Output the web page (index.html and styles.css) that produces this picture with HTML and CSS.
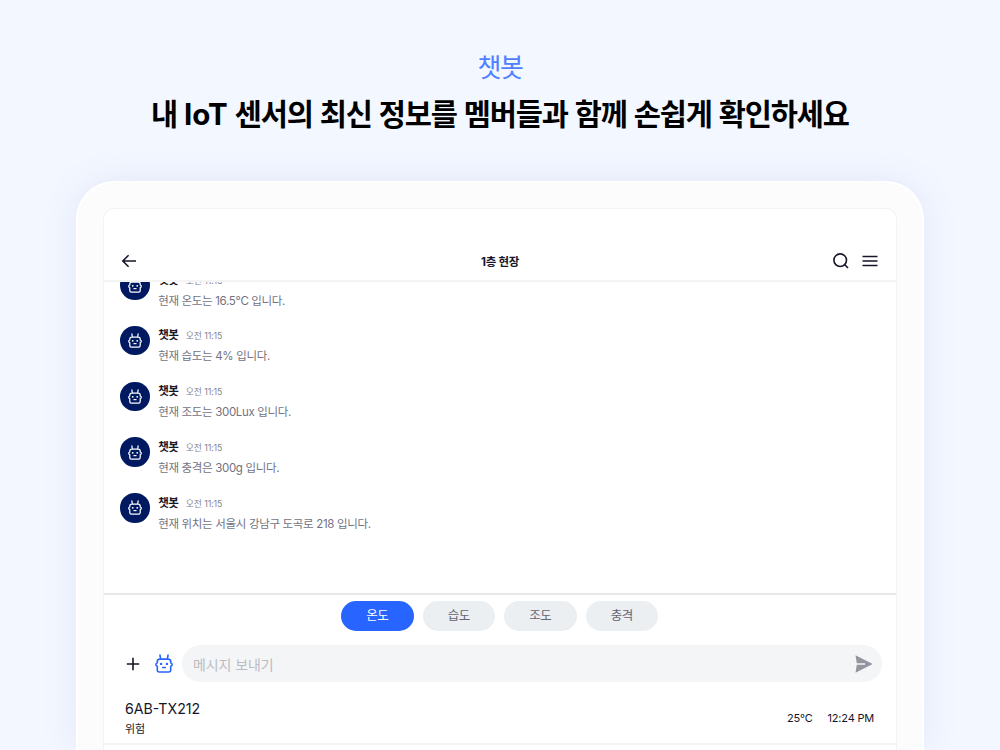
FILE: index.html
```html
<!DOCTYPE html>
<html lang="ko">
<head>
    <meta charset="UTF-8">
    <meta name="viewport" content="width=device-width, initial-scale=1.0">
    <title>챗봇</title>
    <link rel="stylesheet" href="styles.css">
</head>
<body>
    <svg class="symbols" width="0" height="0">
        <symbol id="robot" viewBox="0 0 18 19">
            <path d="M5 1 5.500 4.900M13 1 12.500 4.900M5 5.100h8q2.500 0 2.700 2v1.600q1.400.4 1.400 1.800t-1.400 1.800v3.700q0 2-2 2H4.300q-2 0-2-2v-3.700Q.9 11.900.9 10.500t1.400-1.800V7.100Q2.500 5.100 5 5.100z" fill="none" stroke="currentColor" stroke-width="1.600" stroke-linecap="round" stroke-linejoin="round"/>
            <path d="M7 13.500h4" fill="none" stroke="currentColor" stroke-width="1.500"/>
            <circle cx="6.100" cy="9.900" r="1.200" fill="currentColor"/>
            <circle cx="11.900" cy="9.900" r="1.200" fill="currentColor"/>
        </symbol>
    </svg>
    <div class="intro">
        <p class="label">챗봇</p>
        <h1>내 <span>IoT</span> 센서의 최신 정보를 멤버들과 함께 손쉽게 확인하세요</h1>
    </div>
    <div class="tablet">
        <div class="screen">
            <div class="header">
                <svg class="back" viewBox="0 0 16 14"><path d="M15 7H2M7.600 1.200 1.800 7l5.800 5.800"/></svg>
                <h2>1층 현장</h2>
                <div class="actions">
                    <svg class="find" viewBox="0 0 16 16"><circle cx="7.200" cy="7.200" r="6.300"/><path d="m11.800 11.800 3.200 3.200"/></svg>
                    <svg class="menu" viewBox="0 0 16 12"><path d="M.5 1.500h15M.5 6h15M.5 10.500h15"/></svg>
                </div>
            </div>
            <div class="chat">
                <div class="message">
                    <div class="avatar"><svg><use href="#robot"/></svg></div>
                    <div class="message-body">
                        <div class="who"><b>챗봇</b><span>오전 11:15</span></div>
                        <p>현재 온도는 16.5°C 입니다.</p>
                    </div>
                </div>
                <div class="message">
                    <div class="avatar"><svg><use href="#robot"/></svg></div>
                    <div class="message-body">
                        <div class="who"><b>챗봇</b><span>오전 11:15</span></div>
                        <p>현재 습도는 4% 입니다.</p>
                    </div>
                </div>
                <div class="message">
                    <div class="avatar"><svg><use href="#robot"/></svg></div>
                    <div class="message-body">
                        <div class="who"><b>챗봇</b><span>오전 11:15</span></div>
                        <p>현재 조도는 300Lux 입니다.</p>
                    </div>
                </div>
                <div class="message">
                    <div class="avatar"><svg><use href="#robot"/></svg></div>
                    <div class="message-body">
                        <div class="who"><b>챗봇</b><span>오전 11:15</span></div>
                        <p>현재 충격은 300g 입니다.</p>
                    </div>
                </div>
                <div class="message">
                    <div class="avatar"><svg><use href="#robot"/></svg></div>
                    <div class="message-body">
                        <div class="who"><b>챗봇</b><span>오전 11:15</span></div>
                        <p>현재 위치는 서울시 강남구 도곡로 218 입니다.</p>
                    </div>
                </div>
            </div>
            <div class="sensors">
                <button class="active">온도</button>
                <button>습도</button>
                <button>조도</button>
                <button>충격</button>
            </div>
            <div class="compose">
                <svg class="plus" viewBox="0 0 14 14"><path d="M7 .8v12.400M.8 7h12.400"/></svg>
                <svg class="bot"><use href="#robot"/></svg>
                <div class="field">
                    <span>메시지 보내기</span>
                    <svg class="send" viewBox="0 0 18 18"><path d="M.5.3 17.700 9 .5 17.700 1.800 9.700H10V8.300H1.800z"/></svg>
                </div>
            </div>
            <div class="device">
                <div class="device-name">
                    <strong>6AB-TX212</strong>
                    <span>위험</span>
                </div>
                <div class="device-info">
                    <span>25°C</span>
                    <span>12:24 PM</span>
                </div>
            </div>
        </div>
    </div>
</body>
</html>
```
FILE: styles.css
```css
* {
    box-sizing: border-box;
    margin: 0;
    padding: 0;
}
body {
    height: 750px;
    overflow: hidden;
    background-color: #f3f7ff;
    color: #161529;
    font-family: Inter, "Noto Sans CJK KR", sans-serif;
}
svg {
    display: block;
    flex: none;
}
.symbols {
    position: absolute;
}
.intro {
    height: 181px;
    padding-top: 49px;
    text-align: center;
    white-space: nowrap;
}
.label {
    color: #4f80ff;
    font-size: 26px;
    line-height: 38px;
    letter-spacing: -1.4px;
}
h1 {
    margin-top: 5px;
    color: #000;
    font-size: 29.5px;
    font-weight: 700;
    line-height: 44px;
    letter-spacing: -1.1px;
    word-spacing: 1px;
}
h1 span {
    letter-spacing: 0;
}
.tablet {
    width: 848px;
    height: 569px;
    margin: 0 auto;
    padding: 25px 25px 0;
    border: 2px solid #fff;
    border-bottom: none;
    border-radius: 38px 38px 0 0;
    background-color: #fcfcfc;
    box-shadow: 0 0 36px rgba(70, 100, 190, 0.1);
}
.screen {
    height: 542px;
    border: 1px solid #f3f3f4;
    border-bottom: none;
    border-radius: 11px 11px 0 0;
    background-color: #fff;
    overflow: hidden;
}
.header {
    display: flex;
    align-items: center;
    justify-content: space-between;
    height: 73px;
    padding: 32px 17.5px 0 17px;
    border-bottom: 2px solid #f4f4f5;
}
.header svg,
.plus {
    fill: none;
    stroke: #161529;
    stroke-width: 1.6;
}
.back {
    width: 16px;
    height: 14px;
}
.header h2 {
    padding: 2px 0 0 30px;
    font-size: 11.5px;
    line-height: 18px;
    letter-spacing: -0.3px;
}
.actions {
    display: flex;
    align-items: center;
    gap: 13.5px;
}
.find {
    width: 16px;
    height: 16px;
}
.menu {
    width: 16px;
    height: 12px;
}
.chat {
    display: flex;
    flex-direction: column;
    justify-content: flex-end;
    gap: 14.7px;
    height: 311px;
    padding-bottom: 59px;
    overflow: hidden;
}
.message {
    display: flex;
    flex: none;
    gap: 8.4px;
    height: 41px;
    padding-left: 16.3px;
}
.avatar {
    display: flex;
    align-items: center;
    justify-content: center;
    width: 29.5px;
    height: 29.5px;
    border-radius: 50%;
    background-color: #001960;
    color: #fff;
}
.avatar svg {
    width: 14px;
    height: 15px;
}
.who {
    display: flex;
    align-items: center;
    gap: 7.5px;
    height: 17px;
}
.who b {
    font-size: 11.5px;
    letter-spacing: -0.5px;
}
.who span {
    padding-top: 3px;
    color: #85848f;
    font-size: 8.8px;
    letter-spacing: -0.1px;
}
.message p {
    margin-top: 4.5px;
    color: #73727f;
    font-size: 11.5px;
    line-height: 18px;
    letter-spacing: -0.33px;
}
.sensors {
    display: flex;
    justify-content: center;
    gap: 9px;
    height: 44px;
    padding: 6px 1px 0 0;
    border-top: 2px solid #e8e8ea;
}
.sensors button {
    width: 72.5px;
    height: 30px;
    padding-bottom: 3px;
    border: none;
    border-radius: 15px;
    background-color: #ebeff2;
    color: #666572;
    font-family: inherit;
    font-size: 12.5px;
    letter-spacing: -0.4px;
}
.sensors .active {
    background-color: #2864ff;
    color: #fff;
}
.compose {
    display: flex;
    align-items: center;
    height: 53px;
    padding: 0 14px 0 21.5px;
}
.plus {
    width: 14px;
    height: 14px;
    margin-right: 15.5px;
}
.bot {
    width: 18px;
    height: 19px;
    margin-right: 9px;
    color: #2864ff;
}
.field {
    display: flex;
    flex: 1;
    align-items: center;
    justify-content: space-between;
    height: 37px;
    padding: 0 9px 0 11px;
    border-radius: 19px;
    background-color: #f4f5f7;
    color: #bcbcc1;
    font-size: 14px;
    letter-spacing: -0.1px;
}
.send {
    width: 18px;
    height: 18px;
    fill: #95949f;
}
.device {
    display: flex;
    align-items: center;
    justify-content: space-between;
    height: 55px;
    padding: 2px 22px 0 21px;
    border-bottom: 2px solid #f3f3f4;
}
.device-name strong {
    display: block;
    font-size: 14.2px;
    font-weight: 400;
    line-height: 22px;
}
.device-name span {
    display: block;
    font-size: 11px;
    line-height: 18px;
}
.device-info {
    display: flex;
    gap: 15px;
    font-size: 11px;
    letter-spacing: -0.2px;
}
```
